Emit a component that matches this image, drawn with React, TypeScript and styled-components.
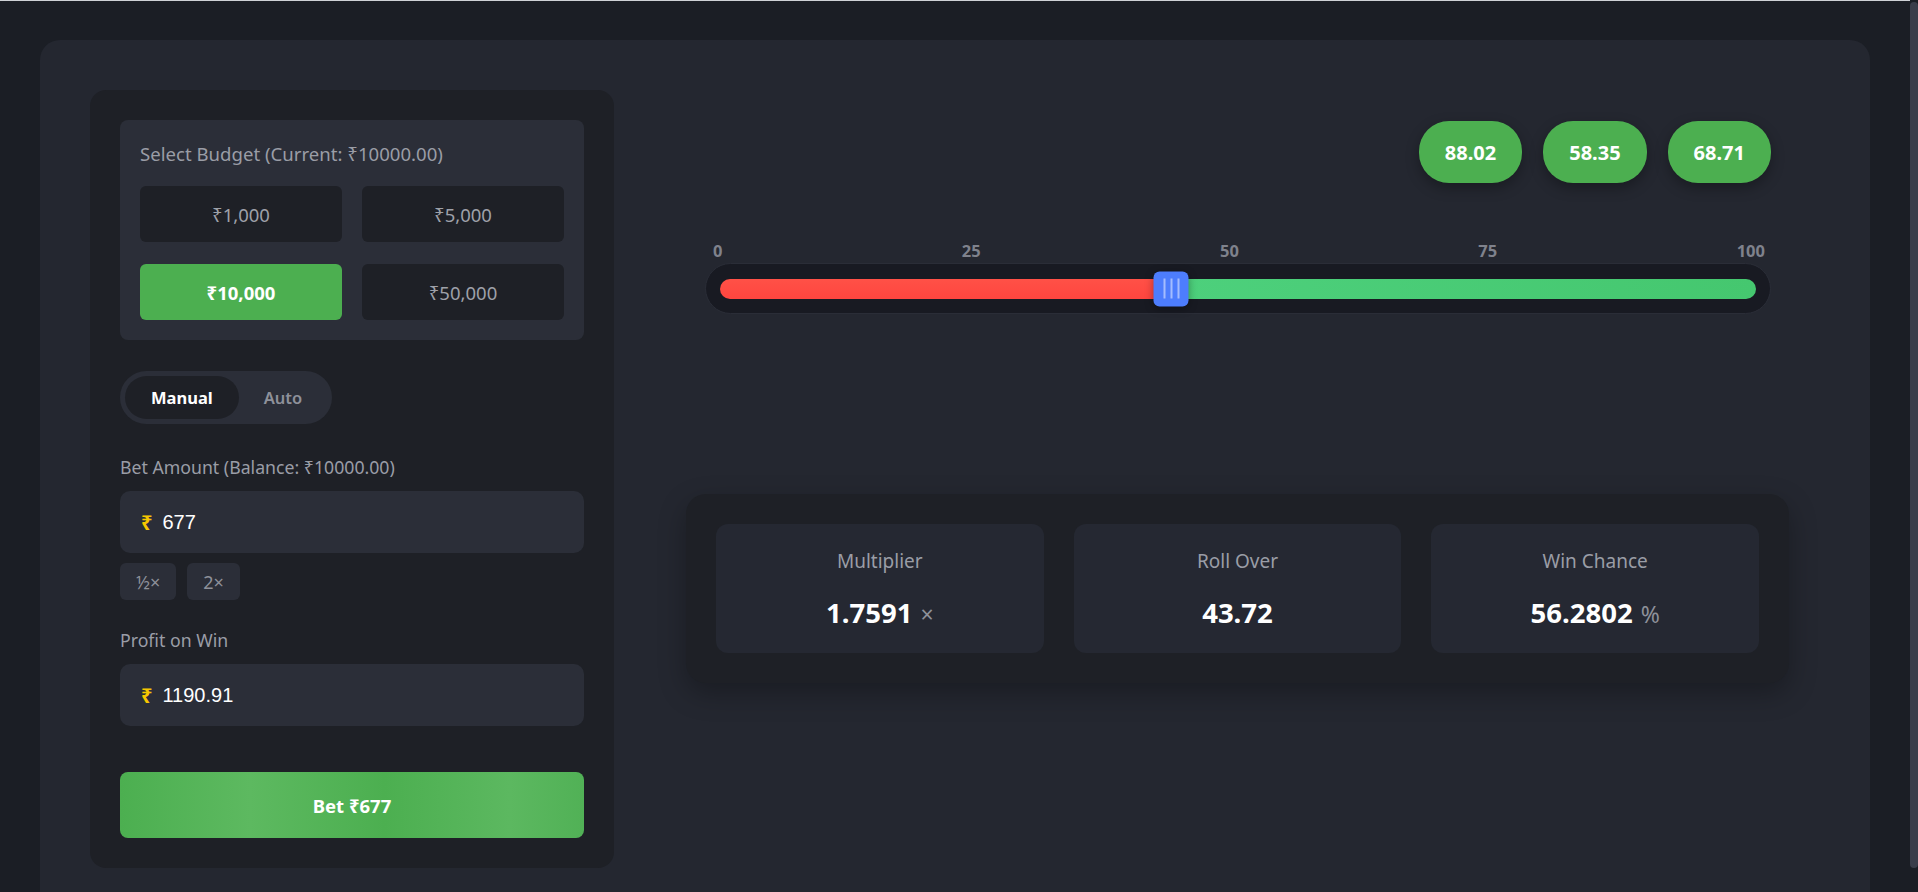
import React from "react";
import styled, { createGlobalStyle } from "styled-components";

const Global = createGlobalStyle`
  html { background: #1b1e25; border-top: 1px solid #cfd2d6; }
  body {
    margin: 0;
    padding: 39px 48px 0 40px;
    background: #1b1e25;
    font-family: "Noto Sans", "Open Sans", "DejaVu Sans", sans-serif;
  }
  * { box-sizing: border-box; }
  ::-webkit-scrollbar { width: 0; }
`;

const ScrollTrack = styled.div`
  position: fixed;
  top: 0;
  right: 0;
  width: 8px;
  height: 100vh;
  background: #1b1e25;
  padding-top: 2px;
`;

const ScrollThumb = styled.div`
  width: 8px;
  height: 866px;
  border-radius: 4px;
  background: #3a3d4a;
`;

const Panel = styled.main`
  background: #242730;
  border-radius: 20px;
  padding: 50px;
  display: grid;
  grid-template-columns: 524px 1fr;
  column-gap: 40px;
  align-items: start;
`;

const ControlCard = styled.section`
  background: #1e2026;
  border-radius: 16px;
  padding: 30px;
  display: flex;
  flex-direction: column;
`;

const BudgetBox = styled.div`
  background: #2b2e38;
  border-radius: 8px;
  padding: 20px;
`;

const BudgetTitle = styled.div`
  font-size: 18.6px;
  line-height: 24px;
  color: #9a9da6;
  padding-top: 2px;
  margin-bottom: 20px;
`;

const BudgetGrid = styled.div`
  display: grid;
  grid-template-columns: 1fr 1fr;
  gap: 22px 20px;
`;

const BudgetButton = styled.button<{ $active?: boolean }>`
  height: 56px;
  border: none;
  border-radius: 6px;
  font-family: inherit;
  font-size: 18.5px;
  font-weight: ${(p) => (p.$active ? 700 : 400)};
  color: ${(p) => (p.$active ? "#ffffff" : "#9ea1a9")};
  background: ${(p) => (p.$active ? "#4caf50" : "#1e2026")};
  cursor: pointer;
`;

const Toggle = styled.div`
  margin-top: 31px;
  align-self: flex-start;
  display: inline-flex;
  padding: 5px;
  background: #2b2e38;
  border-radius: 27px;
`;

const ToggleOption = styled.button<{ $active?: boolean }>`
  height: 43px;
  padding: 0 ${(p) => (p.$active ? 26 : 25)}px;
  border: none;
  border-radius: 22px;
  font-family: inherit;
  font-size: 16.5px;
  font-weight: ${(p) => (p.$active ? 700 : 600)};
  color: ${(p) => (p.$active ? "#ffffff" : "#8e919a")};
  background: ${(p) => (p.$active ? "#1e2026" : "transparent")};
`;

const FieldLabel = styled.div<{ $gap: number }>`
  margin-top: ${(p) => p.$gap}px;
  font-size: 17.7px;
  line-height: 24px;
  color: #9a9da6;
  margin-bottom: 12px;
`;

const InputBox = styled.label`
  height: 62px;
  display: flex;
  align-items: center;
  gap: 10px;
  padding: 0 21px;
  background: #2b2e38;
  border-radius: 10px;
`;

const Rupee = styled.span`
  color: #f6c700;
  font-weight: 700;
  font-size: 20px;
  font-family: "Noto Sans", "DejaVu Sans", sans-serif;
`;

const ValueInput = styled.input`
  flex: 1;
  background: transparent;
  border: none;
  outline: none;
  color: #ffffff;
  font-family: "Liberation Sans", Arial, sans-serif;
  font-size: 20px;
  padding: 0;
`;

const ChipRow = styled.div`
  display: flex;
  gap: 11px;
  margin-top: 10px;
`;

const Chip = styled.button`
  height: 37px;
  padding: 0 16px;
  border: none;
  border-radius: 6px;
  background: #2b2e38;
  color: #8e919a;
  font-family: inherit;
  font-size: 18px;
`;

const BetButton = styled.button`
  margin-top: 46px;
  height: 66px;
  border: none;
  border-radius: 8px;
  background: linear-gradient(90deg, #4caf50 0%, #5db960 28%, #4caf50 57%, #5cb860 84%, #51b156 100%);
  color: #ffffff;
  font-family: inherit;
  font-size: 18.5px;
  font-weight: 700;
`;

const RightColumn = styled.section`
  display: flex;
  flex-direction: column;
`;

const GameArea = styled.div`
  padding: 0 49px 0 51px;
  display: flex;
  flex-direction: column;
`;

const HistoryRow = styled.div`
  margin-top: 31px;
  display: flex;
  justify-content: flex-end;
  gap: 21px;
`;

const HistoryPill = styled.div`
  height: 62px;
  padding: 0 26px;
  display: flex;
  align-items: center;
  border-radius: 30px;
  background: #4caf50;
  color: #ffffff;
  font-weight: 700;
  font-size: 20px;
  box-shadow: 0 5px 14px rgba(0, 0, 0, 0.3);
`;

const ScaleLabels = styled.div`
  margin: 58px 0 2px;
  display: flex;
  justify-content: space-between;
  padding: 0 6px 0 8px;
  font-size: 16.5px;
  line-height: 20px;
  font-weight: 700;
  color: #7f828c;
`;

const Track = styled.div`
  position: relative;
  height: 51px;
  border: 1px solid #2a2d37;
  border-radius: 26px;
  background: #181a22;
  padding: 0 14px;
  display: flex;
  align-items: center;
`;

const Bar = styled.div`
  flex: 1;
  height: 20px;
  display: flex;
  border-radius: 10px;
  overflow: hidden;
`;

const LoseSegment = styled.div`
  height: 100%;
  background: linear-gradient(180deg, #ff5147, #ff453f);
`;

const WinSegment = styled.div`
  flex: 1;
  height: 100%;
  background: linear-gradient(90deg, #4dd07c, #45c76f);
`;

const Handle = styled.div`
  position: absolute;
  top: 50%;
  width: 35px;
  height: 35px;
  transform: translate(-50%, -50%);
  border-radius: 6px;
  background: #4d7dfd;
  box-shadow: 0 2px 8px rgba(0, 0, 0, 0.35);
  display: flex;
  align-items: center;
  justify-content: center;
  gap: 5px;
`;

const Grip = styled.span`
  width: 2px;
  height: 20px;
  background: rgba(210, 222, 255, 0.65);
`;

const StatsCard = styled.div`
  margin: 180px 31px 0 32px;
  padding: 30px;
  background: #1e2026;
  border-radius: 20px;
  box-shadow: 0 10px 28px rgba(0, 0, 0, 0.28);
  display: grid;
  grid-template-columns: repeat(3, 1fr);
  gap: 30px;
`;

const StatBox = styled.div`
  height: 129px;
  background: #252832;
  border-radius: 12px;
  padding-top: 25px;
  display: flex;
  flex-direction: column;
  align-items: center;
`;

const StatLabel = styled.div`
  font-size: 19px;
  line-height: 24px;
  color: #9a9da6;
`;

const StatValue = styled.div`
  margin-top: 23px;
  font-size: 27.5px;
  line-height: 34px;
  font-weight: 700;
  color: #ffffff;
  display: flex;
  align-items: baseline;
`;

const StatSuffix = styled.span`
  margin-left: 8px;
  font-size: 23px;
  font-weight: 400;
  color: #8e919a;
`;

const budgets = ["₹1,000", "₹5,000", "₹10,000", "₹50,000"];
const history = ["88.02", "58.35", "68.71"];
const rollOver = 43.72;

export default function App() {
  return (
    <>
      <Global />
      <Panel>
        <ControlCard>
          <BudgetBox>
            <BudgetTitle>Select Budget (Current: ₹10000.00)</BudgetTitle>
            <BudgetGrid>
              {budgets.map((b) => (
                <BudgetButton key={b} $active={b === "₹10,000"}>
                  {b}
                </BudgetButton>
              ))}
            </BudgetGrid>
          </BudgetBox>

          <Toggle>
            <ToggleOption $active>Manual</ToggleOption>
            <ToggleOption>Auto</ToggleOption>
          </Toggle>

          <FieldLabel $gap={31}>Bet Amount (Balance: ₹10000.00)</FieldLabel>
          <InputBox>
            <Rupee>₹</Rupee>
            <ValueInput defaultValue="677" />
          </InputBox>
          <ChipRow>
            <Chip>½×</Chip>
            <Chip>2×</Chip>
          </ChipRow>

          <FieldLabel $gap={28}>Profit on Win</FieldLabel>
          <InputBox>
            <Rupee>₹</Rupee>
            <ValueInput defaultValue="1190.91" readOnly />
          </InputBox>

          <BetButton>Bet ₹677</BetButton>
        </ControlCard>

        <RightColumn>
          <GameArea>
            <HistoryRow>
              {history.map((h) => (
                <HistoryPill key={h}>{h}</HistoryPill>
              ))}
            </HistoryRow>
            <ScaleLabels>
              <span>0</span>
              <span>25</span>
              <span>50</span>
              <span>75</span>
              <span>100</span>
            </ScaleLabels>
            <Track>
              <Bar>
                <LoseSegment style={{ width: `${rollOver - 0.3}%` }} />
                <WinSegment />
              </Bar>
              <Handle style={{ left: `${rollOver}%` }}>
                <Grip />
                <Grip />
                <Grip />
              </Handle>
            </Track>
          </GameArea>

          <StatsCard>
            <StatBox>
              <StatLabel>Multiplier</StatLabel>
              <StatValue>
                1.7591<StatSuffix>×</StatSuffix>
              </StatValue>
            </StatBox>
            <StatBox>
              <StatLabel>Roll Over</StatLabel>
              <StatValue>43.72</StatValue>
            </StatBox>
            <StatBox>
              <StatLabel>Win Chance</StatLabel>
              <StatValue>
                56.2802<StatSuffix>%</StatSuffix>
              </StatValue>
            </StatBox>
          </StatsCard>
        </RightColumn>
      </Panel>
      <ScrollTrack>
        <ScrollThumb />
      </ScrollTrack>
    </>
  );
}
